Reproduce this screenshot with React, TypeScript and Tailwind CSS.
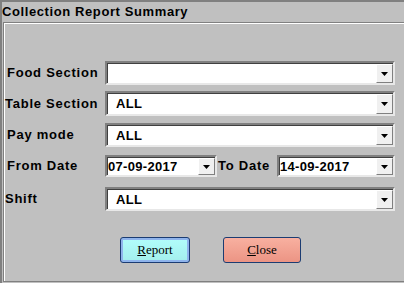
import React from 'react';

const font = "font-['Liberation_Sans',Arial,sans-serif]";

const Arrow = () => (
  <svg width="7" height="4" viewBox="0 0 7 4">
    <path d="M0 0h7L3.5 4z" fill="#000" />
  </svg>
);

const Combo: React.FC<{ value?: string; w: string; h: string; indent?: boolean }> = ({ value, w, h, indent }) => (
  <div className={`${w} ${h} flex border-2 border-t-[#808080] border-l-[#808080] border-b-[#e8e8e8] border-r-[#e8e8e8] bg-white`}>
    <div className="flex-1 flex border-t border-l border-[#404040] border-b-0 border-r-0 bg-white">
      <div className={`flex-1 flex items-center ${indent ? 'pl-[8px]' : 'pl-[0px]'} text-[13px] font-bold text-black tracking-[0.3px] ${font}`}>
        {value}
      </div>
      <div className="w-[17px] flex items-center justify-center bg-[#f0f0f0] border border-t-white border-l-white border-b-[#808080] border-r-[#808080]">
        <Arrow />
      </div>
    </div>
  </div>
);

const Label: React.FC<{ text: string; pl: string }> = ({ text, pl }) => (
  <div className={`w-[100px] ${pl} text-[13px] font-bold text-black tracking-[0.75px] ${font}`}>{text}</div>
);

export default function App() {
  return (
    <div className="w-[404px] h-[283px] bg-[#c0c0c0] border-t-2 border-l-2 border-[#808080] overflow-hidden">
      <div className={`h-[20px] flex items-center text-[13px] font-bold text-black tracking-[0.6px] ${font}`}>
        Collection Report Summary
      </div>
      <div className="ml-[1px] h-[260px] border-t border-l border-b border-[#808080]">
        <div className="h-full border-t border-l border-white pt-[37px]">
          <div className="flex items-center h-[24px]">
            <Label text="Food Section" pl="pl-[2px]" />
            <Combo w="w-[290px]" h="h-[24px]" />
          </div>
          <div className="flex items-center h-[25px] mt-[6px]">
            <Label text="Table Section" pl="pl-0" />
            <Combo w="w-[290px]" h="h-[25px]" value="ALL" indent />
          </div>
          <div className="flex items-center h-[24px] mt-[7px]">
            <Label text="Pay mode" pl="pl-[2px]" />
            <Combo w="w-[290px]" h="h-[24px]" value="ALL" indent />
          </div>
          <div className="flex items-center h-[22px] mt-[8px]">
            <Label text="From Date" pl="pl-[2px]" />
            <Combo w="w-[112px]" h="h-[22px]" value="07-09-2017" />
            <div className={`w-[60px] pl-[1px] text-[13px] font-bold text-black tracking-[0.75px] ${font}`}>To Date</div>
            <Combo w="w-[118px]" h="h-[22px]" value="14-09-2017" />
          </div>
          <div className="flex items-center h-[24px] mt-[10px]">
            <Label text="Shift" pl="pl-0" />
            <Combo w="w-[290px]" h="h-[24px]" value="ALL" indent />
          </div>
          <div className="flex mt-[26px] pl-[115px] gap-[33px]">
            <button className="w-[70px] h-[26px] rounded-[3px] border border-[#1c3c72] bg-[#8fb4ec] p-[2px]">
              <div className="w-full h-full bg-gradient-to-b from-[#b0fcfa] to-[#a4f0ee] flex items-center justify-center text-[13px] text-black font-['Liberation_Serif',serif]">
                <span><span className="underline">R</span>eport</span>
              </div>
            </button>
            <button className="w-[78px] h-[26px] rounded-[3px] border border-[#1c3c72] bg-gradient-to-b from-[#f8b0a0] to-[#ec9484] flex items-center justify-center text-[13px] text-black font-['Liberation_Serif',serif]">
              <span><span className="underline">C</span>lose</span>
            </button>
          </div>
        </div>
      </div>
    </div>
  );
}
